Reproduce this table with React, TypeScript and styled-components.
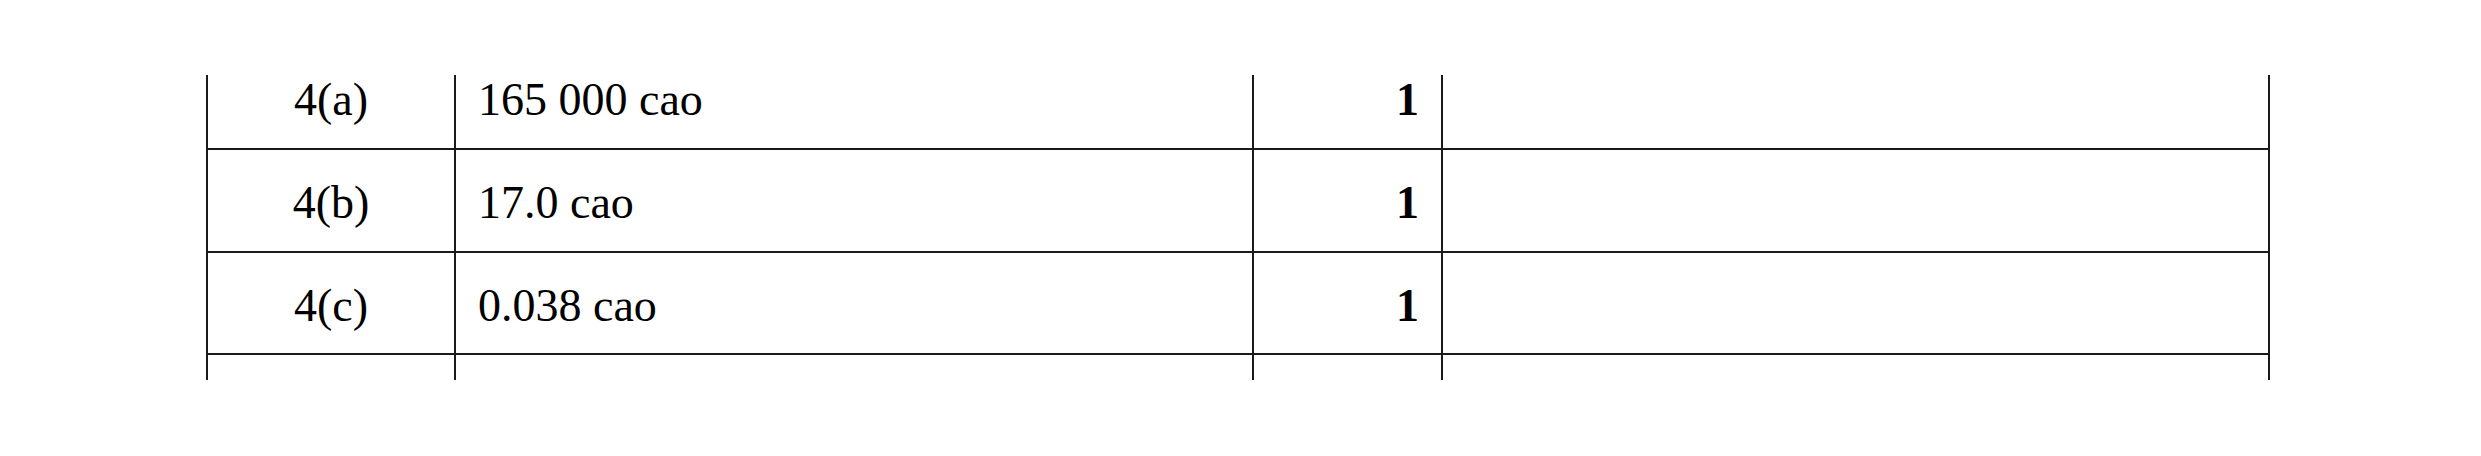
import React from "react";
import styled, { createGlobalStyle, css } from "styled-components";

const GlobalStyle = createGlobalStyle`
  html, body {
    margin: 0;
    padding: 0;
    background: #ffffff;
  }
  body {
    font-family: "Liberation Serif", "Times New Roman", serif;
    color: #000000;
  }
`;

const Page = styled.div`
  width: 2481px;
  height: 456px;
  padding: 75px 0 0 206px;
  box-sizing: border-box;
`;

const Table = styled.div`
  width: 2064px;
  display: flex;
  flex-direction: column;
`;

type Variant = "top" | "full" | "tail";

const Row = styled.div<{ $variant: Variant }>`
  display: grid;
  grid-template-columns: 248px 798px 189px 829px;
  box-sizing: border-box;
  ${(p) =>
    p.$variant === "top"
      ? css`
          height: 75px;
          border-bottom: 2px solid #1a1a1a;
          align-items: stretch;
        `
      : p.$variant === "full"
      ? css`
          height: 102.5px;
          border-bottom: 2px solid #1a1a1a;
        `
      : css`
          height: 25px;
        `}
`;

type Align = "center" | "left" | "right";

const Cell = styled.div<{
  $align: Align;
  $bold?: boolean;
  $last?: boolean;
  $variant: Variant;
}>`
  box-sizing: border-box;
  border-left: 2px solid #1a1a1a;
  border-right: ${(p) => (p.$last ? "2px solid #1a1a1a" : "none")};
  display: flex;
  align-items: ${(p) => (p.$variant === "top" ? "flex-end" : "center")};
  justify-content: ${(p) =>
    p.$align === "center" ? "center" : p.$align === "left" ? "flex-start" : "flex-end"};
  padding: ${(p) => (p.$variant === "top" ? "0 22px 25.5px 22px" : "6px 22px 0 22px")};
  font-family: "Liberation Serif", "Times New Roman", serif;
  font-size: 46px;
  line-height: 46px;
  font-weight: ${(p) => (p.$bold ? 700 : 400)};
  white-space: nowrap;
`;

const rows: { q: string; answer: string; mark: string; variant: Variant }[] = [
  { q: "4(a)", answer: "165 000 cao", mark: "1", variant: "top" },
  { q: "4(b)", answer: "17.0 cao", mark: "1", variant: "full" },
  { q: "4(c)", answer: "0.038 cao", mark: "1", variant: "full" },
  { q: "", answer: "", mark: "", variant: "tail" },
];

export default function App() {
  return (
    <>
      <GlobalStyle />
      <Page>
        <Table>
          {rows.map((r, i) => (
            <Row key={i} $variant={r.variant}>
              <Cell $variant={r.variant} $align="center">
                {r.q}
              </Cell>
              <Cell $variant={r.variant} $align="left">
                {r.answer}
              </Cell>
              <Cell $variant={r.variant} $align="right" $bold>
                {r.mark}
              </Cell>
              <Cell $variant={r.variant} $align="left" $last />
            </Row>
          ))}
        </Table>
      </Page>
    </>
  );
}
